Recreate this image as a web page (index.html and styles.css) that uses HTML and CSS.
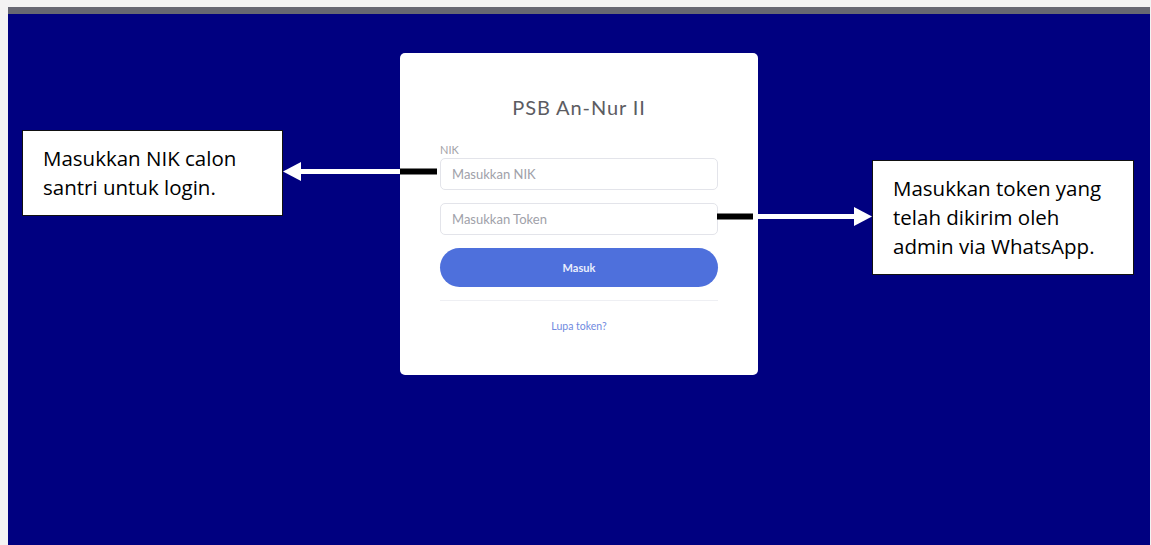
FILE: index.html
```html
<!DOCTYPE html>
<html lang="id">
<head>
<meta charset="utf-8">
<title>PSB An-Nur II - Login</title>
<link rel="stylesheet" href="styles.css">
</head>
<body>
<div class="screen">
  <div class="card">
    <h1 class="card-title">PSB An-Nur II</h1>
    <form class="login-form">
      <label class="field-label" for="nik">NIK</label>
      <input class="field" id="nik" type="text" placeholder="Masukkan NIK">
      <input class="field" id="token" type="text" placeholder="Masukkan Token">
      <button class="btn-login" type="button">Masuk</button>
    </form>
    <hr class="divider">
    <a class="forgot" href="#">Lupa token?</a>
  </div>

  <div class="note note-left"><p>Masukkan NIK calon<br>santri untuk login.</p></div>
  <svg class="arrow arrow-left" width="156" height="22" viewBox="0 0 156 22">
    <rect x="117" y="7.5" width="37" height="6" fill="#000"/>
    <rect x="16" y="8" width="101" height="5" fill="#fff"/>
    <polygon points="0,10.5 18,1 18,20" fill="#fff"/>
  </svg>

  <div class="note note-right"><p>Masukkan token yang<br>telah dikirim oleh<br>admin via WhatsApp.</p></div>
  <svg class="arrow arrow-right" width="156" height="22" viewBox="0 0 156 22">
    <rect x="0" y="7.5" width="36" height="6" fill="#000"/>
    <rect x="36" y="8" width="104" height="5" fill="#fff"/>
    <polygon points="155,10.5 137,1 137,20" fill="#fff"/>
  </svg>
</div>
</body>
</html>
```

FILE: styles.css
```css
html, body {
  height: 100%;
}

body {
  margin: 7px 0 0 8px;
  background: #f3f3f3;
  overflow: hidden;
}

.screen {
  position: relative;
  width: 1142px;
  height: 540px;
  border-top: 7px solid #676872;
  background: #000080;
  padding-top: 39px;
  box-sizing: border-box;
  display: flex;
  flex-direction: column;
  align-items: center;
}

/* login card */
.card {
  width: 358px;
  box-sizing: border-box;
  padding: 42px 40px 42px;
  background: #fff;
  border-radius: 5px;
  font-family: "Lato", "Open Sans", sans-serif;
  display: flex;
  flex-direction: column;
}

.card-title {
  margin: 0 0 24px;
  font-size: 20px;
  line-height: 24px;
  font-weight: 400;
  color: #5c5c62;
  text-align: center;
  letter-spacing: 0.9px;
}

.login-form {
  display: flex;
  flex-direction: column;
  gap: 13px;
}

.field-label {
  font-size: 11px;
  line-height: 14px;
  color: #a3a3a8;
  margin-bottom: -12px;
}

.field {
  height: 32px;
  box-sizing: border-box;
  margin: 0;
  padding: 0 11px;
  border: 1px solid #e3e4ea;
  border-radius: 5px;
  font-family: inherit;
  font-size: 13px;
  color: #6e707e;
  background: #fff;
  outline: none;
}

.field::placeholder {
  color: #a0a1a9;
}

.btn-login {
  height: 39px;
  margin: 0;
  border: 0;
  border-radius: 20px;
  background: #4e70dc;
  color: #e9eefc;
  font-family: inherit;
  font-size: 11px;
  font-weight: 700;
  cursor: pointer;
}

.divider {
  margin: 13px 0 18px;
  border: 0;
  border-top: 1px solid #eeeff3;
}

.forgot {
  align-self: center;
  font-size: 10.5px;
  line-height: 14px;
  color: #6f8ae0;
  text-decoration: none;
}

/* annotation callouts */
.note {
  position: absolute;
  box-sizing: border-box;
  display: flex;
  align-items: center;
  background: #fff;
  border: 1px solid #111;
  font-family: "Open Sans", "Liberation Sans", sans-serif;
  font-size: 20.5px;
  line-height: 29px;
  color: #000;
}

.note p {
  margin: 0;
}

.note-left {
  left: 14px;
  top: 116px;
  width: 261px;
  height: 86px;
  padding: 0 8px 0 20px;
}

.note-right {
  left: 864px;
  top: 146px;
  width: 262px;
  height: 115px;
  padding: 0 8px 0 20px;
}

.arrow {
  position: absolute;
  display: block;
}

.arrow-left {
  left: 275px;
  top: 147px;
}

.arrow-right {
  left: 709px;
  top: 192px;
}
```
